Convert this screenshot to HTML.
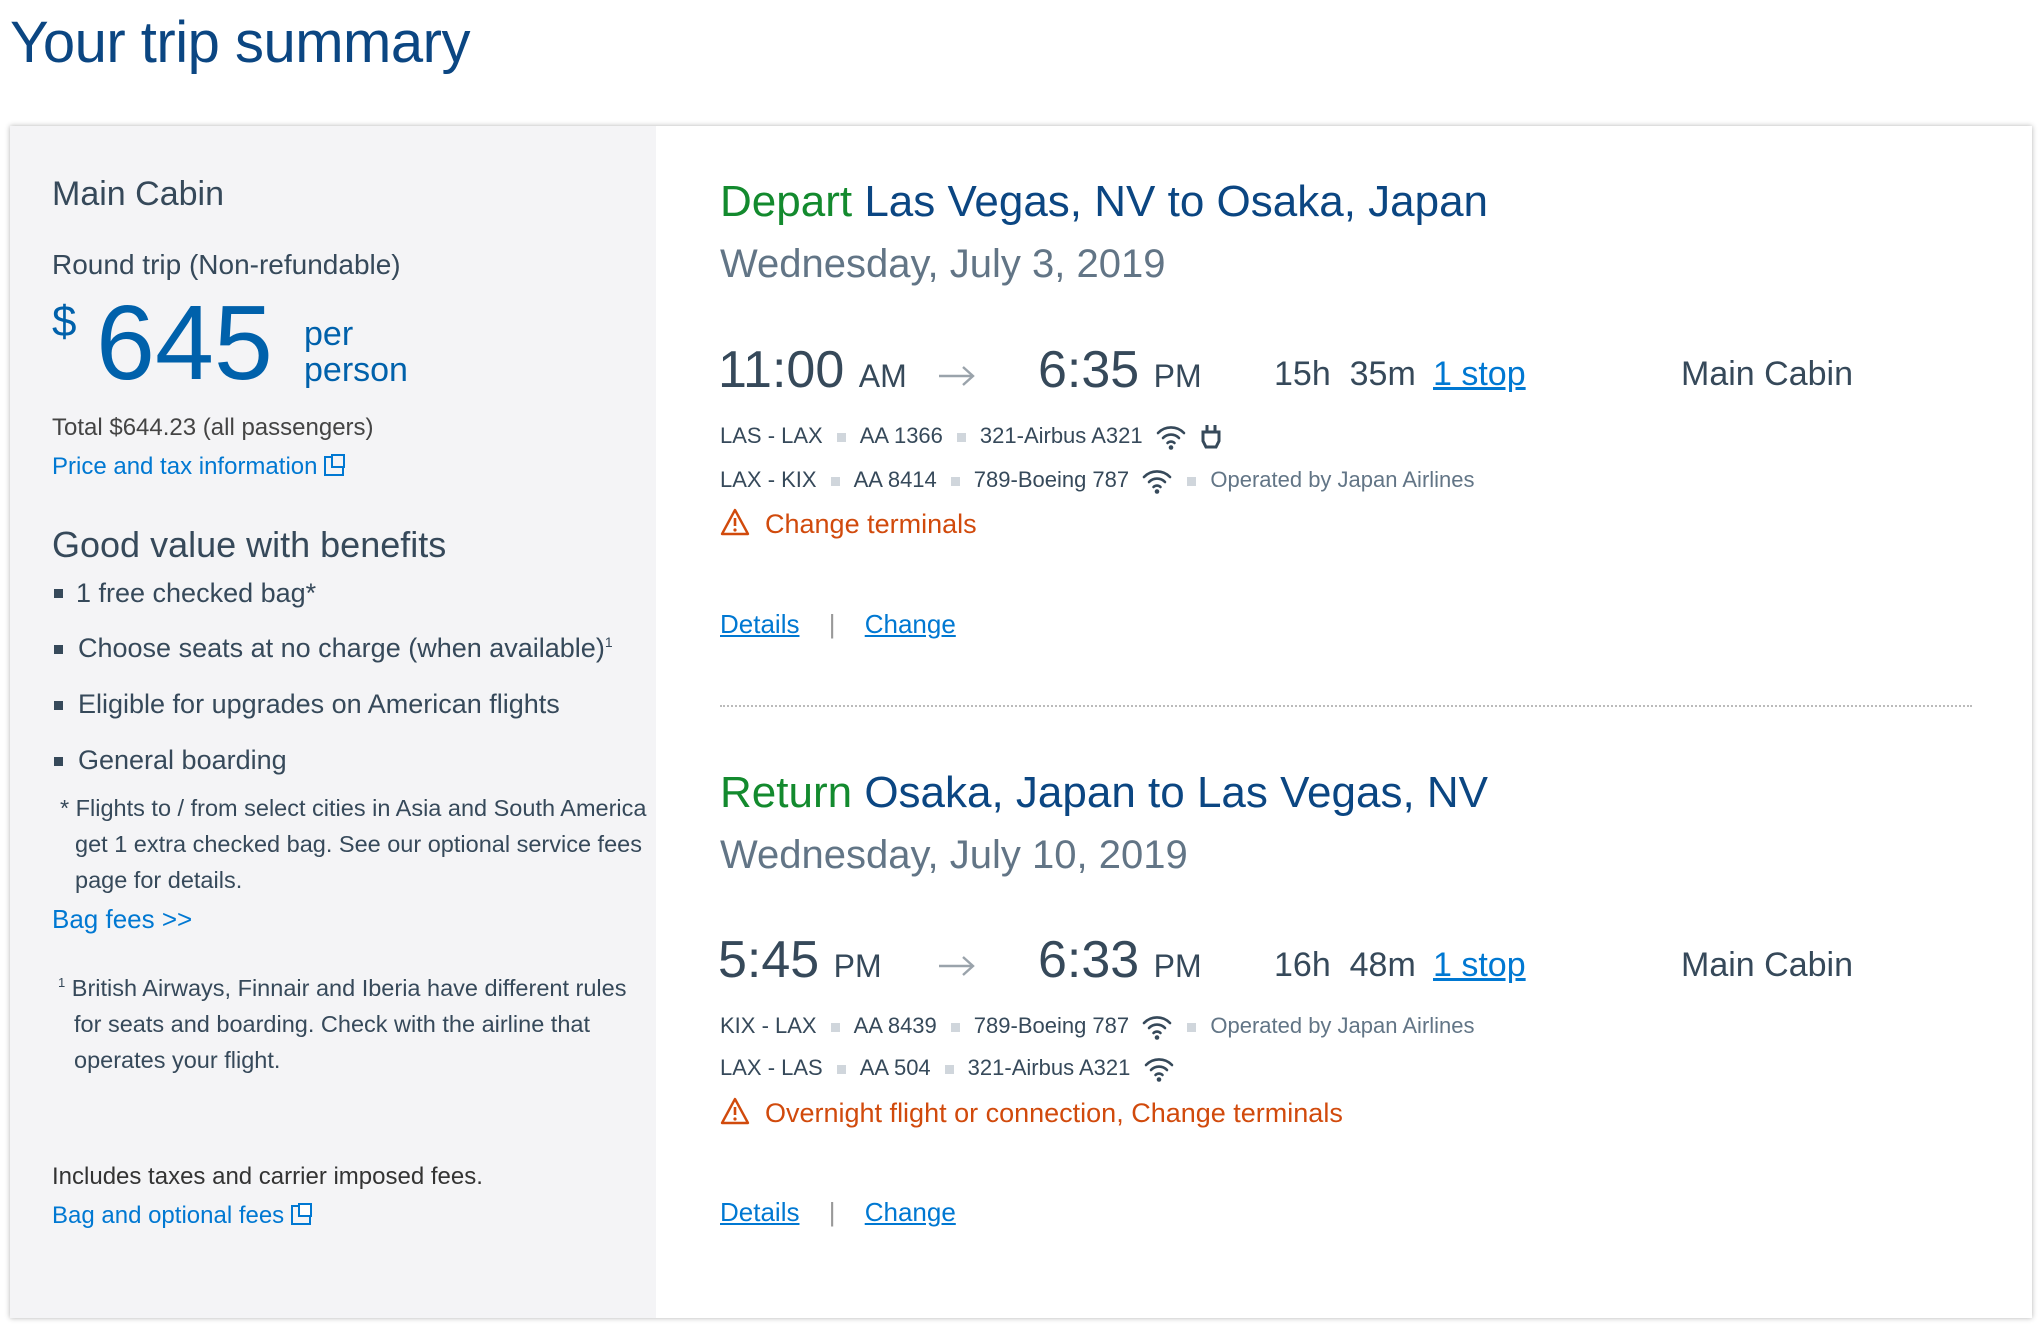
<!DOCTYPE html>
<html><head><meta charset="utf-8"><style>
*{margin:0;padding:0;box-sizing:border-box}
body{width:2044px;height:1326px;background:#fff;font-family:"Liberation Sans",sans-serif;position:relative;overflow:hidden;color:#36495a}
.t{position:absolute;white-space:nowrap;line-height:1}
.card{position:absolute;left:10px;top:126px;width:2022px;height:1192px;background:#fff;box-shadow:0 0 5px rgba(0,0,0,.3)}
.left{position:absolute;left:10px;top:126px;width:646px;height:1192px;background:#f4f4f6}
.u{text-decoration:underline;color:#0078d2}
.sq{display:inline-block;width:9px;height:9px;background:#d0d6dc;margin:0 14px;vertical-align:middle}
.bul{position:absolute;width:9px;height:9px;background:#36495a}
.g{color:#138a2e}.b{color:#0b4682}.d{color:#627586}
.o{color:#d14a0c}
svg{vertical-align:middle}
</style></head><body>
<svg width="0" height="0" style="position:absolute"><defs>
<symbol id="wifi" viewBox="0 0 32 28"><g fill="none" stroke="#36495a" stroke-width="2.6" stroke-linecap="round"><path d="M3 10 A18 18 0 0 1 29 10"/><path d="M8 15 A11 11 0 0 1 24 15"/><path d="M12.5 20 A5 5 0 0 1 19.5 20"/></g><circle cx="16" cy="24.5" r="2.3" fill="#36495a"/></symbol>
<symbol id="plug" viewBox="0 0 24 28"><g fill="none" stroke="#36495a" stroke-width="3"><path d="M8 2v7M16 2v7"/><path d="M4 9h16v9l-3 6H7l-3-6z"/></g></symbol>
<symbol id="warn" viewBox="0 0 30 28"><path d="M15 2 L28 26 H2 Z" fill="none" stroke="#d14a0c" stroke-width="2.4" stroke-linejoin="round"/><path d="M15 10v8" stroke="#d14a0c" stroke-width="2.6"/><circle cx="15" cy="22" r="1.6" fill="#d14a0c"/></symbol>
<symbol id="arr" viewBox="0 0 40 24"><g fill="none" stroke="#9aa3ab" stroke-width="2.4"><path d="M2 12h34"/><path d="M26 3l10 9-10 9"/></g></symbol>
</defs></svg>
<div class="t" style="left:10px;top:14px;font-size:58px;color:#0b4682;letter-spacing:-0.5px">Your trip summary</div>
<div class="card"></div>
<div class="left"></div>

<div class="t" style="left:52px;top:177px;font-size:34px">Main Cabin</div>
<div class="t" style="left:52px;top:251px;font-size:28px">Round trip (Non-refundable)</div>
<div class="t" style="left:52px;top:300px;font-size:44px;color:#0061ab">$</div>
<div class="t" style="left:96px;top:290px;font-size:106px;color:#0061ab">645</div>
<div class="t" style="left:304px;top:316px;font-size:34px;color:#0061ab;line-height:36px">per<br>person</div>
<div class="t" style="left:52px;top:416px;font-size:24px;color:#444">Total $644.23 (all passengers)</div>
<div class="t" style="left:52px;top:455px;font-size:24px;color:#0078d2">Price and tax information <span style="display:inline-block;width:20px;height:20px;border:2px solid #0078d2;vertical-align:-2px;position:relative"><span style="position:absolute;left:5px;top:-4px;width:14px;height:14px;border:2px solid #0078d2;background:#f4f4f6"></span></span></div>

<div class="t" style="left:52px;top:527px;font-size:36px">Good value with benefits</div>
<div class="bul" style="left:54px;top:589px"></div><div class="t" style="left:76px;top:580px;font-size:27px">1 free checked bag*</div>
<div class="bul" style="left:54px;top:645px"></div><div class="t" style="left:78px;top:635px;font-size:27px">Choose seats at no charge (when available)<sup style="font-size:14px">1</sup></div>
<div class="bul" style="left:54px;top:701px"></div><div class="t" style="left:78px;top:691px;font-size:27px">Eligible for upgrades on American flights</div>
<div class="bul" style="left:54px;top:757px"></div><div class="t" style="left:78px;top:747px;font-size:27px">General boarding</div>
<div class="t" style="left:60px;top:790px;font-size:23.5px;line-height:36px">* Flights to / from select cities in Asia and South America<br><span style="padding-left:15px">get 1 extra checked bag. See our optional service fees</span><br><span style="padding-left:15px">page for details.</span></div>
<div class="t" style="left:52px;top:906px;font-size:26px;color:#0078d2">Bag fees &gt;&gt;</div>
<div class="t" style="left:58px;top:965px;font-size:23.5px;line-height:36px"><sup style="font-size:13px">1</sup> British Airways, Finnair and Iberia have different rules<br><span style="padding-left:16px">for seats and boarding. Check with the airline that</span><br><span style="padding-left:16px">operates your flight.</span></div>
<div class="t" style="left:52px;top:1165px;font-size:24px;color:#333">Includes taxes and carrier imposed fees.</div>
<div class="t" style="left:52px;top:1204px;font-size:24px;color:#0078d2">Bag and optional fees <span style="display:inline-block;width:20px;height:20px;border:2px solid #0078d2;vertical-align:-2px;position:relative"><span style="position:absolute;left:5px;top:-4px;width:14px;height:14px;border:2px solid #0078d2;background:#fff"></span></span></div>

<!-- Depart -->
<div class="t" style="left:720px;top:180px;font-size:44px"><span class="g">Depart</span> <span class="b">Las Vegas, NV to Osaka, Japan</span></div>
<div class="t d" style="left:720px;top:244px;font-size:40px">Wednesday, July 3, 2019</div>
<div class="t" style="left:718px;top:344px;font-size:52px">11:00 <span style="font-size:32px">AM</span></div>
<svg style="position:absolute;left:937px;top:364px" width="40" height="24"><use href="#arr"/></svg>
<div class="t" style="left:1038px;top:344px;font-size:52px">6:35 <span style="font-size:32px">PM</span></div>
<div class="t" style="left:1274px;top:357px;font-size:34px">15h&nbsp; 35m</div>
<div class="t u" style="left:1433px;top:357px;font-size:34px">1 stop</div>
<div class="t" style="left:1681px;top:357px;font-size:34px">Main Cabin</div>
<div class="t" style="left:720px;top:423px;font-size:22px">LAS - LAX<span class="sq"></span>AA 1366<span class="sq"></span>321-Airbus A321 &nbsp;<svg width="32" height="28"><use href="#wifi"/></svg>&nbsp;&nbsp;<svg width="24" height="28"><use href="#plug"/></svg></div>
<div class="t" style="left:720px;top:467px;font-size:22px">LAX - KIX<span class="sq"></span>AA 8414<span class="sq"></span>789-Boeing 787 &nbsp;<svg width="32" height="28"><use href="#wifi"/></svg><span class="sq"></span><span class="d">Operated by Japan Airlines</span></div>
<div class="t o" style="left:720px;top:508px;font-size:27px"><svg width="30" height="28" style="vertical-align:-3px"><use href="#warn"/></svg>&nbsp; Change terminals</div>
<div class="t" style="left:720px;top:611px;font-size:26px"><span class="u">Details</span> <span style="color:#999;margin:0 22px">|</span> <span class="u">Change</span></div>
<div style="position:absolute;left:720px;top:705px;width:1252px;border-top:2px dotted #bbb"></div>

<!-- Return -->
<div class="t" style="left:720px;top:771px;font-size:44px"><span class="g">Return</span> <span class="b">Osaka, Japan to Las Vegas, NV</span></div>
<div class="t d" style="left:720px;top:835px;font-size:40px">Wednesday, July 10, 2019</div>
<div class="t" style="left:718px;top:934px;font-size:52px">5:45 <span style="font-size:32px">PM</span></div>
<svg style="position:absolute;left:937px;top:954px" width="40" height="24"><use href="#arr"/></svg>
<div class="t" style="left:1038px;top:934px;font-size:52px">6:33 <span style="font-size:32px">PM</span></div>
<div class="t" style="left:1274px;top:948px;font-size:34px">16h&nbsp; 48m</div>
<div class="t u" style="left:1433px;top:948px;font-size:34px">1 stop</div>
<div class="t" style="left:1681px;top:948px;font-size:34px">Main Cabin</div>
<div class="t" style="left:720px;top:1013px;font-size:22px">KIX - LAX<span class="sq"></span>AA 8439<span class="sq"></span>789-Boeing 787 &nbsp;<svg width="32" height="28"><use href="#wifi"/></svg><span class="sq"></span><span class="d">Operated by Japan Airlines</span></div>
<div class="t" style="left:720px;top:1055px;font-size:22px">LAX - LAS<span class="sq"></span>AA 504<span class="sq"></span>321-Airbus A321 &nbsp;<svg width="32" height="28"><use href="#wifi"/></svg></div>
<div class="t o" style="left:720px;top:1097px;font-size:27px"><svg width="30" height="28" style="vertical-align:-3px"><use href="#warn"/></svg>&nbsp; Overnight flight or connection, Change terminals</div>
<div class="t" style="left:720px;top:1199px;font-size:26px"><span class="u">Details</span> <span style="color:#999;margin:0 22px">|</span> <span class="u">Change</span></div>
</body></html>
